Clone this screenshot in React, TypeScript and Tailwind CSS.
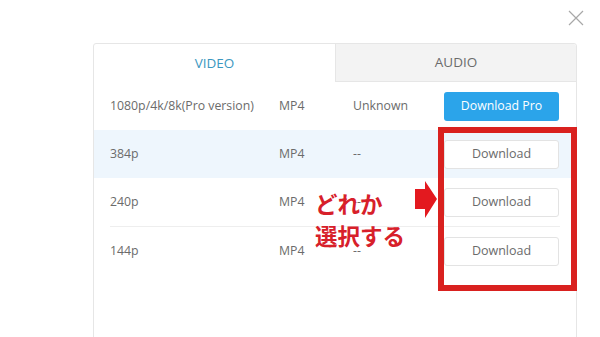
import React from 'react';

const rows = [
  { q: '1080p/4k/8k(Pro version)', fmt: 'MP4', size: 'Unknown', pro: true },
  { q: '384p', fmt: 'MP4', size: '--', hl: true },
  { q: '240p', fmt: 'MP4', size: '--' },
  { q: '144p', fmt: 'MP4', size: '--' },
];

export default function App() {
  return (
    <div
      className="relative w-[600px] h-[337px] overflow-hidden bg-white text-[12.3px] text-[#6b6b6b]"
      style={{ fontFamily: '"Open Sans", "Noto Sans", sans-serif' }}
    >
      {/* close */}
      <svg className="absolute left-[568px] top-[10px]" width="16" height="16" viewBox="0 0 16 16">
        <path d="M1 1 L15 15 M15 1 L1 15" stroke="#a8a8a8" strokeWidth="1.2" fill="none" />
      </svg>

      <div className="pt-[43px] pl-[93px]">
        <div className="w-[484px] h-[320px] border border-[#e6e6e6] rounded-t-[3px] bg-white">
          {/* tabs */}
          <div className="flex h-[38px]">
            <div className="w-[241px] flex items-center justify-center text-[#3c97c0] text-[13.5px]">VIDEO</div>
            <div className="flex-1 flex items-center justify-center bg-[#f3f3f3] border-l border-b border-[#e6e6e6] text-[#6b6b6b] text-[13.5px] rounded-tr-[3px]">
              AUDIO
            </div>
          </div>

          {/* list */}
          <div>
            {rows.map((r, i) => (
              <div key={i} className={r.hl ? 'bg-[#eef6fd]' : ''}>
                <div
                  className={`mx-4 grid grid-cols-[169px_74px_91px_115px] items-center ${
                    i === 3 ? 'h-[49px]' : 'h-[48px]'
                  } ${i === 2 ? 'border-b border-[#eeeeee] h-[49px]' : ''}`}
                >
                  <span>{r.q}</span>
                  <span>{r.fmt}</span>
                  <span>{r.size}</span>
                  {r.pro ? (
                    <button className="h-[29px] rounded-[3px] bg-[#2ba4ea] text-white text-[12.3px]">Download Pro</button>
                  ) : (
                    <button className="h-[29px] rounded-[3px] bg-white border border-[#e3e3e3] text-[#6b6b6b] text-[12.5px]">Download</button>
                  )}
                </div>
              </div>
            ))}
          </div>
        </div>
      </div>

      {/* annotation: red frame */}
      <div className="absolute left-[438px] top-[127px] w-[139px] h-[164px] border-[6px] border-[#d9211f]" />

      {/* annotation: arrow */}
      <svg className="absolute left-[414px] top-[180px]" width="24" height="40" viewBox="0 0 24 40">
        <path d="M1 9 L11 9 L11 1 L23 19 L11 38 L11 29 L1 29 Z" fill="#e3191f" />
      </svg>

      {/* annotation: text */}
      <div
        className="absolute left-[315px] top-[187px] text-[22.5px] leading-[32px] font-bold text-[#d7202a]"
        style={{ fontFamily: '"Noto Sans CJK JP", sans-serif' }}
      >
        <div>どれか</div>
        <div>選択する</div>
      </div>
    </div>
  );
}
